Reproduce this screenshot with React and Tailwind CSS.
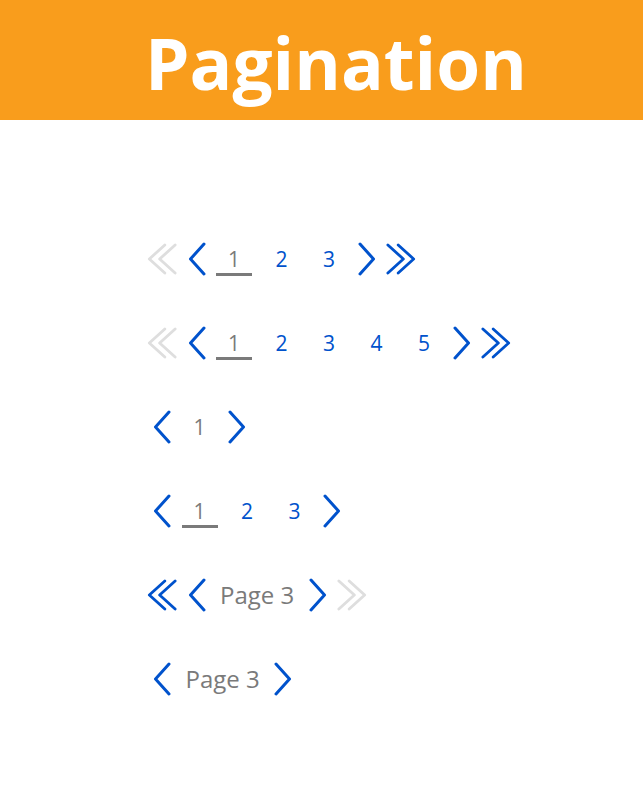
const BLUE = '#0052cc'

function Chevron({ dir = 'left', disabled }) {
  const d = dir === 'left' ? 'M16 2 L2.5 17 L16 32' : 'M2 2 L15.5 17 L2 32'
  return (
    <span className="flex h-[34px] w-[30px] items-center justify-center">
      <svg width="18" height="34" viewBox="0 0 18 34" fill="none">
        <path
          d={d}
          stroke={disabled ? '#dedede' : BLUE}
          strokeWidth="3"
          strokeLinecap="round"
          strokeLinejoin="round"
        />
      </svg>
    </span>
  )
}

function DoubleChevron({ dir = 'left', disabled }) {
  const d =
    dir === 'left'
      ? 'M19 2 L2.5 17 L19 32 M30 2 L13.5 17 L30 32'
      : 'M2 2 L18.5 17 L2 32 M13 2 L29.5 17 L13 32'
  return (
    <span className="flex h-[34px] w-[30px] items-center justify-center">
      <svg width="32" height="34" viewBox="0 0 32 34" fill="none">
        <path
          d={d}
          stroke={disabled ? '#dedede' : BLUE}
          strokeWidth="3"
          strokeLinecap="round"
          strokeLinejoin="round"
        />
      </svg>
    </span>
  )
}

function Numbers({ count, current = 1, underline = true }) {
  return (
    <div className="flex items-center gap-[11.5px]">
      {Array.from({ length: count }, (_, i) => i + 1).map((n) => (
        <span
          key={n}
          className={
            'flex h-[34px] w-9 items-center justify-center border-b-[3px] pt-[3px] text-[21px] leading-none ' +
            (n === current
              ? (underline ? 'border-[#7a7a7a] ' : 'border-transparent ') + 'text-[#7a7a7a]'
              : 'border-transparent text-[#0052cc]')
          }
        >
          {n}
        </span>
      ))}
    </div>
  )
}

function Row({ children }) {
  return <div className="flex h-[84px] items-center gap-[4.5px]">{children}</div>
}

export default function App() {
  return (
    <div className="min-h-screen bg-white" style={{ fontFamily: '"Open Sans", sans-serif' }}>
      <header className="flex h-[120px] items-center bg-[#f99d1c] pl-[145px]">
        <h1 className="pt-[4px] text-[71px] font-bold leading-none text-white">Pagination</h1>
      </header>

      <main className="flex flex-col pl-[147px] pt-[97px]">
        <Row>
          <DoubleChevron dir="left" disabled />
          <Chevron dir="left" />
          <Numbers count={3} />
          <Chevron dir="right" />
          <DoubleChevron dir="right" />
        </Row>
        <Row>
          <DoubleChevron dir="left" disabled />
          <Chevron dir="left" />
          <Numbers count={5} />
          <Chevron dir="right" />
          <DoubleChevron dir="right" />
        </Row>
        <Row>
          <Chevron dir="left" />
          <Numbers count={1} underline={false} />
          <Chevron dir="right" />
        </Row>
        <Row>
          <Chevron dir="left" />
          <Numbers count={3} />
          <Chevron dir="right" />
        </Row>
        <Row>
          <DoubleChevron dir="left" />
          <Chevron dir="left" />
          <span className="px-1 text-[24px] leading-none text-[#7a7a7a]">Page 3</span>
          <Chevron dir="right" />
          <DoubleChevron dir="right" disabled />
        </Row>
        <Row>
          <Chevron dir="left" />
          <span className="px-1 text-[24px] leading-none text-[#7a7a7a]">Page 3</span>
          <Chevron dir="right" />
        </Row>
      </main>
    </div>
  )
}
